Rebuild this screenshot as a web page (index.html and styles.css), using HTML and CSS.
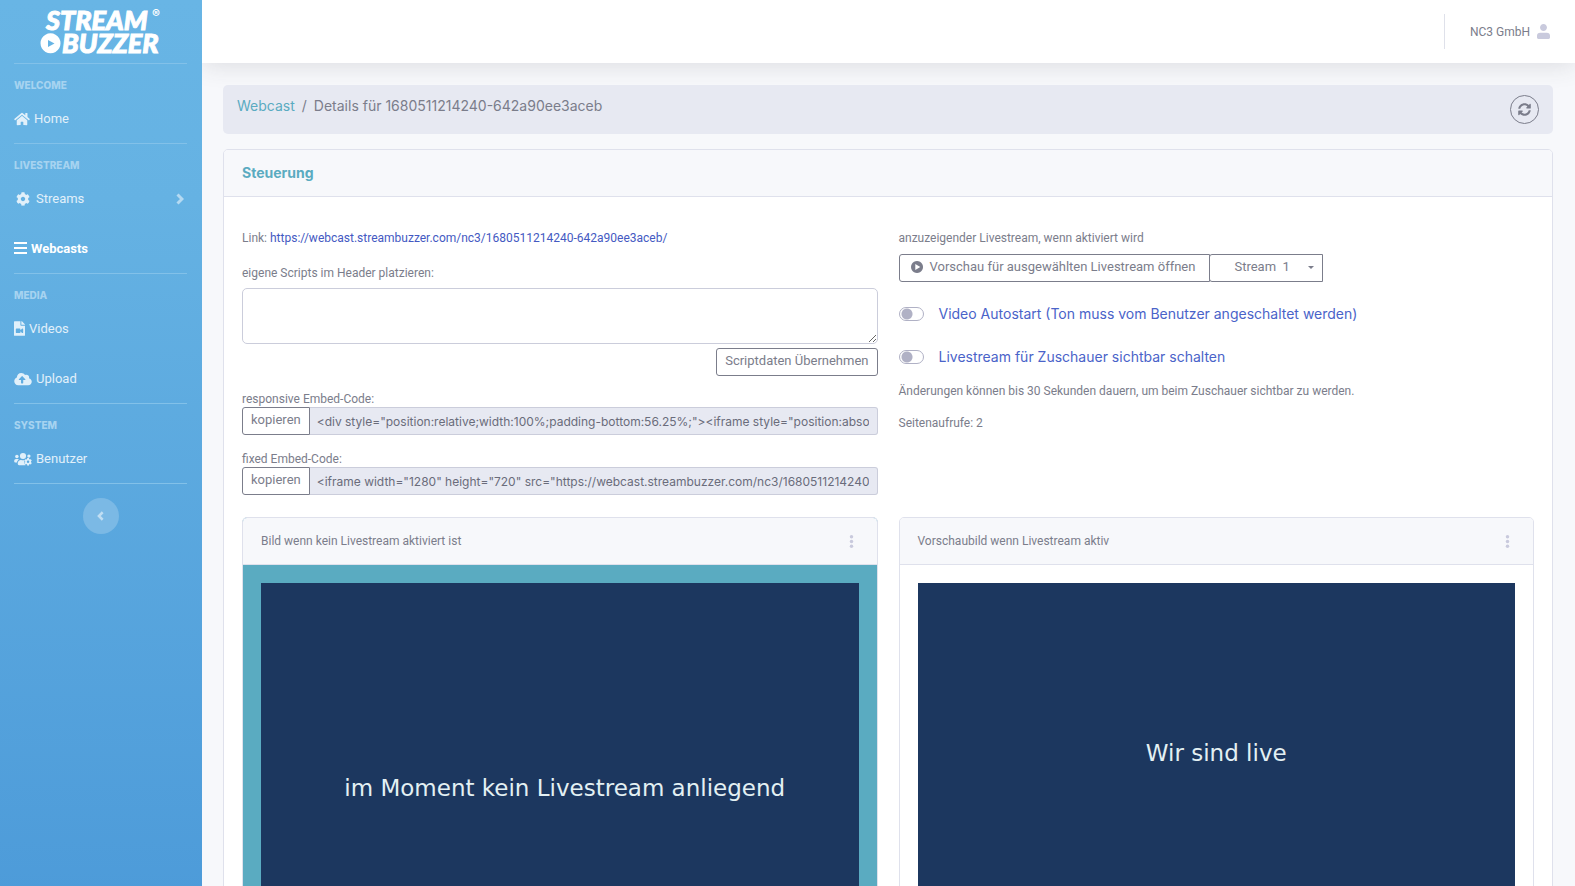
FILE: index.html
```html
<!DOCTYPE html>
<html lang="de">
<head>
<meta charset="utf-8">
<meta name="viewport" content="width=device-width, initial-scale=1">
<title>Streambuzzer – Webcast Details</title>
<link rel="stylesheet" href="styles.css">
</head>
<body>
<svg class="sprite" aria-hidden="true">
  <defs>
    <path id="cog" d="M487.4 315.7l-42.6-24.6c4.3-23.2 4.3-47 0-70.2l42.6-24.6c4.9-2.8 7.1-8.6 5.5-14-11.1-35.6-30-67.8-54.7-94.6-3.8-4.1-10-5.1-14.8-2.3L380.8 110c-17.9-15.4-38.5-27.3-60.8-35.1V25.8c0-5.6-3.9-10.5-9.4-11.7-36.7-8.2-74.3-7.8-109.2 0-5.5 1.2-9.4 6.1-9.4 11.7V75c-22.2 7.9-42.8 19.8-60.8 35.1L88.7 85.5c-4.9-2.8-11-1.9-14.8 2.3-24.7 26.7-43.6 58.9-54.7 94.6-1.7 5.4.6 11.2 5.5 14L67.3 221c-4.3 23.2-4.3 47 0 70.2l-42.6 24.6c-4.9 2.8-7.1 8.6-5.5 14 11.1 35.6 30 67.8 54.7 94.6 3.8 4.1 10 5.1 14.8 2.3l42.6-24.6c17.9 15.4 38.5 27.3 60.8 35.1v49.2c0 5.6 3.9 10.5 9.4 11.7 36.7 8.2 74.3 7.8 109.2 0 5.5-1.2 9.4-6.1 9.4-11.7v-49.2c22.2-7.9 42.8-19.8 60.8-35.1l42.6 24.6c4.9 2.8 11 1.9 14.8-2.3 24.7-26.7 43.6-58.9 54.7-94.6 1.5-5.5-.7-11.3-5.6-14.1zM256 336c-44.1 0-80-35.9-80-80s35.9-80 80-80 80 35.9 80 80-35.9 80-80 80z"/>
    <g id="dots"><circle cx="96" cy="72" r="68"/><circle cx="96" cy="256" r="68"/><circle cx="96" cy="440" r="68"/></g>
  </defs>
</svg>
<div class="layout">
  <nav class="sidebar" aria-label="Hauptmenü">
    <a class="brand" href="#" aria-label="Streambuzzer">
      <svg class="brand-logo" viewBox="0 0 124 52">
        <text class="logo-text" x="6" y="24">STREAM</text>
        <text class="logo-reg" x="112" y="12">®</text>
        <text class="logo-text" x="22" y="47">BUZZER</text>
        <path fill-rule="evenodd" d="M10.500 27.300a10 10 0 1 0 .01 0zM8 34v7l6.500-3.500z"/>
      </svg>
    </a>
    <hr class="divider">
    <div class="nav-heading">WELCOME</div>
    <a class="nav-item" href="#"><svg class="icon i16" viewBox="0 0 576 512"><path d="M280.37 148.26L96 300.11V464a16 16 0 0 0 16 16l112.06-.29a16 16 0 0 0 15.92-16V368a16 16 0 0 1 16-16h64a16 16 0 0 1 16 16v95.64a16 16 0 0 0 16 16.05L464 480a16 16 0 0 0 16-16V300L295.67 148.26a12.19 12.19 0 0 0-15.3 0zM571.6 251.47L488 182.56V44.05a12 12 0 0 0-12-12h-56a12 12 0 0 0-12 12v72.61L318.47 43a48 48 0 0 0-61 0L4.34 251.47a12 12 0 0 0-1.6 16.9l25.5 31A12 12 0 0 0 45.15 301l235.22-193.74a12.19 12.19 0 0 1 15.3 0L530.9 301a12 12 0 0 0 16.9-1.6l25.5-31a12 12 0 0 0-1.7-16.93z"/></svg>Home</a>
    <hr class="divider">
    <div class="nav-heading">LIVESTREAM</div>
    <a class="nav-item" href="#"><svg class="icon i18" viewBox="0 0 512 512"><use href="#cog"/></svg>Streams<svg class="chevron" viewBox="0 0 8 12"><path d="M1.500 1.500L6 6l-4.500 4.500"/></svg></a>
    <a class="nav-item active" href="#" aria-current="page"><svg class="icon i13" viewBox="0 0 13 15"><path d="M0 1h13v2H0zM0 6h13v2H0zM0 11h13v2H0z"/></svg>Webcasts</a>
    <hr class="divider">
    <div class="nav-heading">MEDIA</div>
    <a class="nav-item" href="#"><svg class="icon i11" viewBox="0 0 384 512"><path fill-rule="evenodd" d="M384 121.941V128H256V0h6.059c6.365 0 12.47 2.529 16.971 7.029l97.941 97.941A24.005 24.005 0 0 1 384 121.941zM224 136c0 13.2 10.8 24 24 24h136v328c0 13.255-10.745 24-24 24H24c-13.255 0-24-10.745-24-24V24C0 10.745 10.745 0 24 0h200zM320 280.016v111.963c0 21.445-25.943 31.998-40.971 16.971L224 353.941V392c0 13.255-10.745 24-24 24H88c-13.255 0-24-10.745-24-24V280c0-13.255 10.745-24 24-24h112c13.255 0 24 10.745 24 24v38.059l55.029-55.013c15.011-15.01 40.971-4.491 40.971 16.970z"/></svg>Videos</a>
    <a class="nav-item" href="#"><svg class="icon i18" viewBox="0 0 640 512"><path d="M537.6 226.6c4.1-10.7 6.400-22.400 6.400-34.600 0-53-43-96-96-96-19.700 0-38.100 6-53.300 16.200C367 64.200 315.300 32 256 32c-88.400 0-160 71.600-160 160 0 2.700.1 5.400.2 8.100C40.200 219.800 0 273.200 0 336c0 79.500 64.500 144 144 144h368c70.700 0 128-57.300 128-128 0-61.900-44-113.600-102.400-125.400zM393.400 288H328v112c0 8.800-7.200 16-16 16h-48c-8.800 0-16-7.200-16-16V288h-65.400c-14.300 0-21.400-17.200-11.300-27.300l105.400-105.400c6.200-6.200 16.400-6.200 22.600 0l105.400 105.400c10.100 10.100 2.900 27.300-11.300 27.300z"/></svg>Upload</a>
    <hr class="divider">
    <div class="nav-heading">SYSTEM</div>
    <a class="nav-item" href="#"><svg class="icon i18" viewBox="0 0 640 512"><circle cx="96" cy="160" r="64"/><circle cx="320" cy="144" r="112"/><circle cx="536" cy="150" r="60"/><path d="M64 256h64c18 0 34 7 45 19-40 22-68 61-74 109H32c-18 0-32-14-32-32v-32c0-35 29-64 64-64zM243 288h9c42 20 84 20 124 4-14 30 0 56-6 84-6 30 8 60 28 86 8 8 10 12 10 18H176c-27 0-48-21-48-48v-29c0-64 52-115 115-115z"/><use href="#cog" transform="translate(362 216) scale(.56)"/></svg>Benutzer</a>
    <hr class="divider">
    <button class="collapse" type="button" aria-label="Menü einklappen"><svg class="chevron-left" viewBox="0 0 8 12"><path d="M6 1.500L1.500 6L6 10.500"/></svg></button>
  </nav>

  <div class="page">
    <header class="topbar">
      <a class="account" href="#">NC3 GmbH<svg class="avatar" viewBox="0 0 448 512"><path d="M224 240c66 0 120-54 120-120S290 0 224 0 104 54 104 120s54 120 120 120zM112 296C40 296 0 340 0 400v64c0 26 21 48 48 48h352c27 0 48-22 48-48v-64c0-60-40-104-112-104z"/></svg></a>
    </header>

    <main class="content">
      <div class="breadcrumb">
        <nav class="crumbs" aria-label="Brotkrumen"><a href="#">Webcast</a><span>/</span><span>Details für 1680511214240-642a90ee3aceb</span></nav>
        <button class="refresh" type="button" aria-label="Aktualisieren"><svg viewBox="0 0 512 512"><path d="M370.72 133.28C339.458 104.008 298.888 87.962 255.848 88c-77.458.068-144.328 53.178-162.791 126.85-1.344 5.363-6.122 9.15-11.651 9.15H24.103c-7.498 0-13.194-6.807-11.807-14.176C33.933 94.924 134.813 8 256 8c66.448 0 126.791 26.136 171.315 68.685L463.03 40.97C478.149 25.851 504 36.559 504 57.941V192c0 13.255-10.745 24-24 24H345.941c-21.382 0-32.09-25.851-16.971-40.971l41.75-41.749zM32 296h134.059c21.382 0 32.09 25.851 16.971 40.971l-41.75 41.75c31.262 29.273 71.835 45.319 114.876 45.28 77.418-.07 144.315-53.144 162.787-126.849 1.344-5.363 6.122-9.15 11.651-9.15h57.304c7.498 0 13.194 6.807 11.807 14.176C478.067 417.076 377.187 504 256 504c-66.448 0-126.791-26.136-171.315-68.685L48.97 471.03C33.851 486.149 8 475.441 8 454.059V320c0-13.255 10.745-24 24-24z"/></svg></button>
      </div>

      <section class="card">
        <h1 class="card-header card-title">Steuerung</h1>
        <div class="card-body">
          <div class="columns">
            <div class="column">
              <p class="line">Link: <a class="link" href="#">https://webcast.streambuzzer.com/nc3/1680511214240-642a90ee3aceb/</a></p>
              <label class="line script-label" for="scripts">eigene Scripts im Header platzieren:</label>
              <textarea class="scripts" id="scripts"></textarea>
              <button class="btn save" type="button">Scriptdaten Übernehmen</button>
              <div class="embed">
                <label for="embed-responsive">responsive Embed-Code:</label>
                <div class="group"><button class="btn" type="button">kopieren</button><input class="code" id="embed-responsive" type="text" readonly value="&lt;div style=&quot;position:relative;width:100%;padding-bottom:56.25%;&quot;&gt;&lt;iframe style=&quot;position:absolute;top:0;left:0;width:100%;height:100%;&quot;&gt;&lt;/iframe&gt;&lt;/div&gt;"></div>
              </div>
              <div class="embed">
                <label for="embed-fixed">fixed Embed-Code:</label>
                <div class="group"><button class="btn" type="button">kopieren</button><input class="code" id="embed-fixed" type="text" readonly value="&lt;iframe width=&quot;1280&quot; height=&quot;720&quot; src=&quot;https://webcast.streambuzzer.com/nc3/1680511214240-642a90ee3aceb/&quot;&gt;&lt;/iframe&gt;"></div>
              </div>
            </div>
            <div class="column">
              <label class="line" for="stream">anzuzeigender Livestream, wenn aktiviert wird</label>
              <div class="group stream-group">
                <button class="btn preview" type="button"><svg viewBox="0 0 12 12"><path fill-rule="evenodd" d="M6 0a6 6 0 1 0 .01 0zM4.300 3.100v5.800L9.300 6z"/></svg>Vorschau für ausgewählten Livestream öffnen</button>
                <div class="select-wrap"><select class="btn stream" id="stream"><option>Stream&nbsp; 1</option></select><span class="caret"></span></div>
              </div>
              <label class="toggle"><input type="checkbox">Video Autostart (Ton muss vom Benutzer angeschaltet werden)</label>
              <label class="toggle"><input type="checkbox">Livestream für Zuschauer sichtbar schalten</label>
              <p class="line">Änderungen können bis 30 Sekunden dauern, um beim Zuschauer sichtbar zu werden.</p>
              <p class="line">Seitenaufrufe: 2</p>
            </div>
          </div>
          <div class="columns">
            <section class="card selected">
              <div class="card-header">Bild wenn kein Livestream aktiviert ist<button class="more" type="button" aria-label="Optionen"><svg viewBox="0 0 192 512"><use href="#dots"/></svg></button></div>
              <div class="card-body picture-body"><div class="picture idle">im Moment kein Livestream anliegend</div></div>
            </section>
            <section class="card">
              <div class="card-header">Vorschaubild wenn Livestream aktiv<button class="more" type="button" aria-label="Optionen"><svg viewBox="0 0 192 512"><use href="#dots"/></svg></button></div>
              <div class="card-body picture-body"><div class="picture">Wir sind live</div></div>
            </section>
          </div>
        </div>
      </section>
    </main>
  </div>
</div>
</body>
</html>
```
FILE: styles.css
```css
* { box-sizing: border-box; }

body {
  margin: 0;
  font-family: Roboto, "Liberation Sans", sans-serif;
  font-size: 12px;
  line-height: 18px;
  color: #7b7d8b;
  background: #f7f8fb;
}

a { color: inherit; text-decoration: none; }
p, h1 { margin: 0; }
button, input, select, textarea { font: inherit; color: inherit; }
svg { fill: currentColor; flex: none; }
.sprite { position: absolute; width: 0; height: 0; }

.layout { display: flex; min-height: 100vh; }

/* Sidebar */
.sidebar {
  position: relative;
  z-index: 1;
  display: flex;
  flex-direction: column;
  flex: none;
  width: 202px;
  padding: 0 14px;
  color: #e1f0fa;
  background: linear-gradient(180deg, #68b5e5 0, #65b2e3 200px, #4d9bd9 900px);
}
.brand { display: flex; height: 63px; padding: 6px 0 0 26px; color: #fff; }
.brand-logo { width: 124px; height: 52px; overflow: visible; }
.logo-text { font: italic 900 27px Lato, sans-serif; stroke: currentColor; stroke-width: 1px; }
.logo-reg { font: 700 12px Inter, sans-serif; }
.divider { width: 173px; height: 1px; margin: 0; border: 0; background: #82c1e9; }
.nav-heading {
  padding: 14px 0 0;
  font-family: Inter, sans-serif;
  font-size: 10px;
  font-weight: 800;
  line-height: 15px;
  color: #a6d3f0;
}
.nav-item { display: flex; align-items: center; gap: 4px; height: 50px; padding-top: 1px; font-size: 13px; }
.nav-item.active { font-weight: 700; color: #fff; }
.icon { height: 14px; }
.i18 { width: 18px; }
.i16 { width: 16px; }
.i13 { width: 13px; height: 15px; }
.i11 { width: 11px; height: 15px; }
.chevron, .chevron-left { width: 8px; height: 12px; fill: none; stroke: currentColor; stroke-width: 3; }
.chevron { margin: 0 4px 0 auto; color: #b5daf2; }
.collapse {
  display: flex;
  align-items: center;
  justify-content: center;
  align-self: center;
  width: 36px;
  height: 36px;
  margin-top: 14px;
  padding: 0;
  border: 0;
  border-radius: 50%;
  color: #c0def3;
  background: #7bb9e5;
}
.chevron-left { height: 10px; }

/* Top bar */
.page { flex: 1; min-width: 0; }
.topbar {
  display: flex;
  align-items: center;
  justify-content: flex-end;
  height: 63px;
  padding: 0 25px;
  background: #fff;
  box-shadow: 0 2px 25px rgba(58, 59, 69, 0.15);
}
.account {
  display: flex;
  align-items: center;
  gap: 7px;
  height: 35px;
  padding-left: 25px;
  border-left: 1px solid #dfe1ea;
}
.avatar { width: 13px; height: 15px; color: #c9cadd; }

/* Content */
.content { padding: 22px 22px 22px 21px; }
.breadcrumb {
  display: flex;
  justify-content: space-between;
  margin-bottom: 15px;
  padding: 10px 14px;
  border-radius: 5px;
  background: #e7e9f2;
}
.crumbs { display: flex; gap: 7px; font-family: Inter, sans-serif; font-size: 14px; line-height: 22px; }
.crumbs a, .card-title { color: #5aabc1; }
.refresh {
  display: flex;
  align-items: center;
  justify-content: center;
  width: 29px;
  height: 29px;
  padding: 0;
  border: 1px solid #7b7d8b;
  border-radius: 50%;
  background: none;
}
.refresh svg { width: 13px; height: 13px; }

.card { border: 1px solid #dfe1ec; border-radius: 5px; background: #fff; overflow: hidden; }
.card-header {
  display: flex;
  align-items: center;
  justify-content: space-between;
  height: 47px;
  padding: 0 18px;
  border-bottom: 1px solid #dfe1ec;
  background: #f7f8fb;
}
.card-title { font-family: Inter, sans-serif; font-size: 14px; font-weight: 700; }
.card-body { padding: 32px 18px 18px; }
.columns { display: grid; grid-template-columns: 1fr 1fr; gap: 21px; }
.columns + .columns { margin-top: 22px; }
.column { display: flex; flex-direction: column; align-items: flex-start; min-width: 0; }
.line { line-height: 18px; }
.link { color: #4459c2; }
.script-label { margin: 17px 0 6px; }
.scripts {
  width: 100%;
  height: 56px;
  padding: 6px 10px;
  border: 1px solid #cbcddb;
  border-radius: 5px;
  background: #fff;
}
.btn {
  flex: none;
  height: 28px;
  padding: 0 8px 2px;
  border: 1px solid #7b7d8b;
  border-radius: 3px;
  font-size: 13px;
  background: #fff;
}
.save { align-self: flex-end; margin: 4px 0 14px; }
.embed { width: 100%; }
.embed label { display: block; padding-top: 1px; line-height: 16px; }
.embed + .embed { margin-top: 15px; }
.group { display: flex; }
.group .btn:first-child { border-radius: 3px 0 0 3px; }
.code {
  flex: 1;
  min-width: 0;
  height: 28px;
  padding: 0 8px 0 7px;
  border: 1px solid #cbcddb;
  border-left: 0;
  border-radius: 0 3px 3px 0;
  font-family: Inter, sans-serif;
  font-size: 12px;
  color: #6a6c7b;
  background: #e7e9f2;
}

.stream-group { margin: 7px 0 21px; }
.preview { display: flex; align-items: center; gap: 7px; padding: 0 14px 2px 11px; }
.preview svg { width: 12px; height: 12px; }
.select-wrap { position: relative; margin-left: -1px; }
.group .stream { width: 114px; padding-left: 24px; border-radius: 0 3px 3px 0; appearance: none; }
.caret {
  position: absolute;
  top: 12px;
  right: 9px;
  border: 3px solid transparent;
  border-top-color: #7b7d8b;
  border-bottom: 0;
  pointer-events: none;
}
.toggle {
  display: flex;
  align-items: center;
  gap: 15px;
  margin-bottom: 21px;
  font-family: Inter, sans-serif;
  font-size: 14px;
  line-height: 22px;
  color: #4a63c9;
}
.toggle input {
  width: 25px;
  height: 14px;
  margin: 0;
  border: 1px solid #b0b1c5;
  border-radius: 7px;
  appearance: none;
  background: radial-gradient(circle at 7px 6px, #b0b1c5 5px, #fff 6px);
}
.toggle + .line { margin: -7px 0 14px; }

/* Preview pictures */
.selected { background: #5aabc1; }
.more { display: flex; padding: 0 5px; border: 0; background: none; color: #c9cadd; }
.more svg { width: 5px; height: 13px; }
.picture-body { padding: 18px; }
.picture {
  display: flex;
  align-items: center;
  justify-content: center;
  aspect-ratio: 16 / 9;
  padding-top: 4px;
  font-family: "DejaVu Sans", sans-serif;
  font-size: 23px;
  line-height: 30px;
  color: #e3f0f3;
  background: #1c375f;
}
.idle { padding: 74px 0 0 10px; }
```
